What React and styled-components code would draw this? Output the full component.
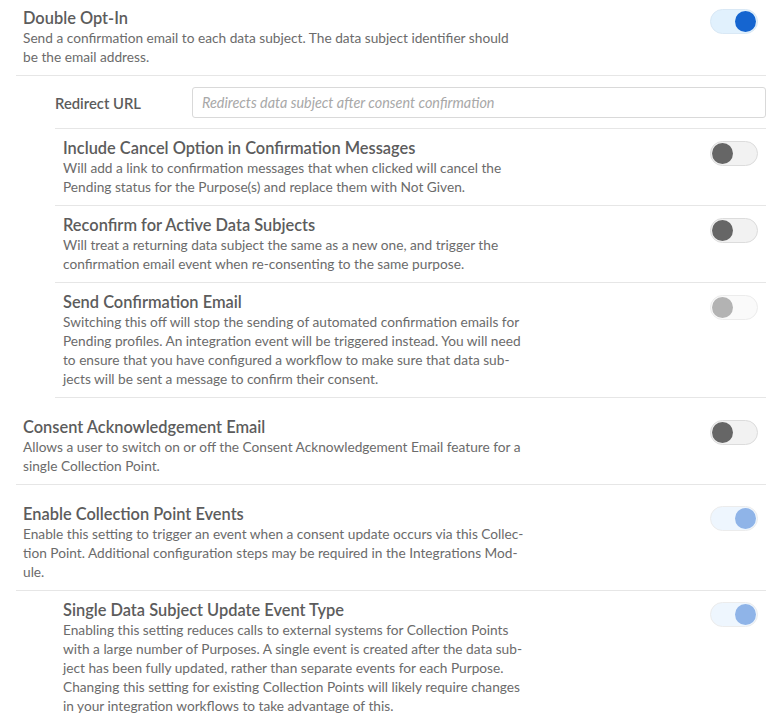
import React from 'react';
import styled, { createGlobalStyle, css } from 'styled-components';

const GlobalStyle = createGlobalStyle`
	body {
		margin: 0;
		background: #fff;
		font-family: Lato, "Open Sans", sans-serif;
		color: #666;
	}
`;

// line breaks follow the original layout
const settings = [
	{
		title       : 'Double Opt-In',
		description : 'Send a confirmation email to each data subject. The data subject identifier should\nbe the email address.',
		state       : 'on',
		first       : true,
		redirect    : true,
		children    : [
			{
				title       : 'Include Cancel Option in Confirmation Messages',
				description : 'Will add a link to confirmation messages that when clicked will cancel the\nPending status for the Purpose(s) and replace them with Not Given.',
				state       : 'off',
			},
			{
				title       : 'Reconfirm for Active Data Subjects',
				description : 'Will treat a returning data subject the same as a new one, and trigger the\nconfirmation email event when re-consenting to the same purpose.',
				state       : 'off',
			},
			{
				title       : 'Send Confirmation Email',
				description : 'Switching this off will stop the sending of automated confirmation emails for\nPending profiles. An integration event will be triggered instead. You will need\nto ensure that you have configured a workflow to make sure that data sub-\njects will be sent a message to confirm their consent.',
				state       : 'offDisabled',
			},
		],
	},
	{
		title       : 'Consent Acknowledgement Email',
		description : 'Allows a user to switch on or off the Consent Acknowledgement Email feature for a\nsingle Collection Point.',
		state       : 'off',
		children    : [],
	},
	{
		title       : 'Enable Collection Point Events',
		description : 'Enable this setting to trigger an event when a consent update occurs via this Collec-\ntion Point. Additional configuration steps may be required in the Integrations Mod-\nule.',
		state       : 'onDisabled',
		children    : [
			{
				title       : 'Single Data Subject Update Event Type',
				description : 'Enabling this setting reduces calls to external systems for Collection Points\nwith a large number of Purposes. A single event is created after the data sub-\nject has been fully updated, rather than separate events for each Purpose.\nChanging this setting for existing Collection Points will likely require changes\nin your integration workflows to take advantage of this.',
				state       : 'onDisabled',
			},
		],
	},
];

const Toggle = ({state}) => {
	const on = state === 'on' || state === 'onDisabled';
	const disabled = state === 'offDisabled' || state === 'onDisabled';
	return (
		<Switch type="button" $on={on} $disabled={disabled} aria-pressed={on}>
			<Knob $on={on} $disabled={disabled} />
		</Switch>
	);
};

const SettingText = ({title, description}) => (
	<TextBlock>
		<Title>{title}</Title>
		<Description>{description}</Description>
	</TextBlock>
);

export default function App() {
	return (
		<>
			<GlobalStyle />
			<Page>
				{settings.map(s => (
					<Group key={s.title}>
						<Header $first={s.first}>
							<SettingText title={s.title} description={s.description} />
							<Toggle state={s.state} />
						</Header>
						{(s.redirect || s.children.length > 0) && (
							<Nested>
								{s.redirect && (
									<RedirectRow>
										<Label>Redirect URL</Label>
										<Input placeholder="Redirects data subject after consent confirmation" />
									</RedirectRow>
								)}
								{s.children.map(c => (
									<NestedRow key={c.title}>
										<SettingText title={c.title} description={c.description} />
										<Toggle state={c.state} />
									</NestedRow>
								))}
							</Nested>
						)}
					</Group>
				))}
			</Page>
		</>
	);
}

const Page = styled.div`
	margin: 0 13px 0 16px;
`;

const Group = styled.section`
	display: flex;
	flex-direction: column;
`;

const Header = styled.div`
	display: flex;
	justify-content: space-between;
	align-items: flex-start;
	gap: 16px;
	padding: ${p => (p.$first ? '8px' : '19px')} 8px 9px 7px;
	border-bottom: 1px solid #e6e6e6;
`;

const Nested = styled.div`
	display: flex;
	flex-direction: column;
	margin-left: 39px;
`;

const NestedRow = styled.div`
	display: flex;
	justify-content: space-between;
	align-items: flex-start;
	gap: 16px;
	padding: 9px 8px 9px 8px;
	border-bottom: 1px solid #e6e6e6;
`;

const RedirectRow = styled.div`
	display: grid;
	grid-template-columns: 137px 1fr;
	align-items: center;
	padding: 11px 0 10px;
	border-bottom: 1px solid #e6e6e6;
`;

const Label = styled.label`
	font-size: 14.8px;
	font-weight: 600;
	color: #5c5c5c;
`;

const Input = styled.input`
	height: 31px;
	box-sizing: border-box;
	border: 1px solid #d9d9d9;
	border-radius: 3px;
	padding: 0 9px;
	font-family: inherit;
	font-size: 14.4px;
	outline: none;

	&::placeholder {
		color: #a8a8a8;
		font-style: italic;
	}
`;

const TextBlock = styled.div`
	flex: 1;
	min-width: 0;
`;

const Title = styled.div`
	font-size: 16.4px;
	font-weight: 600;
	line-height: 20px;
	color: #5c5c5c;
`;

const Description = styled.div`
	font-size: 13.7px;
	line-height: 19px;
	color: #6b6b6b;
	white-space: pre-line;
`;

const Switch = styled.button`
	position: relative;
	flex: none;
	width: 48px;
	height: 25px;
	margin-top: ${p => (p.$on ? '1px' : '3px')};
	padding: 0;
	border-radius: 13px;
	border: 1px solid #dcdcdc;
	background: #f2f2f2;
	cursor: pointer;

	${p => p.$on && css`
		border-color: #d9e8f5;
		background: #e1f1fd;
	`}

	${p => p.$disabled && css`
		cursor: default;
		margin-top: ${p.$on ? '2px' : '3px'};
		border-color: #ececec;
		background: ${p.$on ? '#eef6fe' : '#fafafa'};
	`}
`;

const Knob = styled.span`
	position: absolute;
	top: 1px;
	left: ${p => (p.$on ? '24px' : '1px')};
	width: 21px;
	height: 21px;
	border-radius: 50%;
	background: ${p => {
		if (p.$on) return p.$disabled ? '#8fb4e8' : '#1565d0';
		return p.$disabled ? '#b3b3b3' : '#666666';
	}};
`;
